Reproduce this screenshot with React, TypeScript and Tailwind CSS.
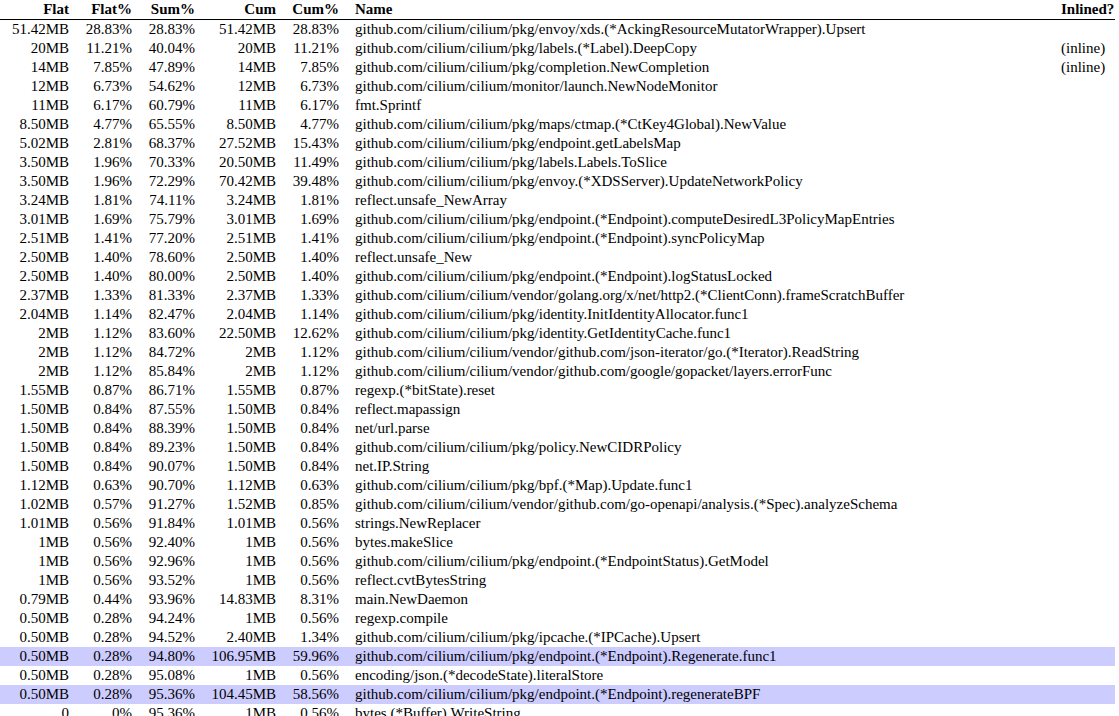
const raw = `51.42MB|28.83%|28.83%|51.42MB|28.83%|github.com/cilium/cilium/pkg/envoy/xds.(*AckingResourceMutatorWrapper).Upsert|
20MB|11.21%|40.04%|20MB|11.21%|github.com/cilium/cilium/pkg/labels.(*Label).DeepCopy|(inline)
14MB|7.85%|47.89%|14MB|7.85%|github.com/cilium/cilium/pkg/completion.NewCompletion|(inline)
12MB|6.73%|54.62%|12MB|6.73%|github.com/cilium/cilium/monitor/launch.NewNodeMonitor|
11MB|6.17%|60.79%|11MB|6.17%|fmt.Sprintf|
8.50MB|4.77%|65.55%|8.50MB|4.77%|github.com/cilium/cilium/pkg/maps/ctmap.(*CtKey4Global).NewValue|
5.02MB|2.81%|68.37%|27.52MB|15.43%|github.com/cilium/cilium/pkg/endpoint.getLabelsMap|
3.50MB|1.96%|70.33%|20.50MB|11.49%|github.com/cilium/cilium/pkg/labels.Labels.ToSlice|
3.50MB|1.96%|72.29%|70.42MB|39.48%|github.com/cilium/cilium/pkg/envoy.(*XDSServer).UpdateNetworkPolicy|
3.24MB|1.81%|74.11%|3.24MB|1.81%|reflect.unsafe_NewArray|
3.01MB|1.69%|75.79%|3.01MB|1.69%|github.com/cilium/cilium/pkg/endpoint.(*Endpoint).computeDesiredL3PolicyMapEntries|
2.51MB|1.41%|77.20%|2.51MB|1.41%|github.com/cilium/cilium/pkg/endpoint.(*Endpoint).syncPolicyMap|
2.50MB|1.40%|78.60%|2.50MB|1.40%|reflect.unsafe_New|
2.50MB|1.40%|80.00%|2.50MB|1.40%|github.com/cilium/cilium/pkg/endpoint.(*Endpoint).logStatusLocked|
2.37MB|1.33%|81.33%|2.37MB|1.33%|github.com/cilium/cilium/vendor/golang.org/x/net/http2.(*ClientConn).frameScratchBuffer|
2.04MB|1.14%|82.47%|2.04MB|1.14%|github.com/cilium/cilium/pkg/identity.InitIdentityAllocator.func1|
2MB|1.12%|83.60%|22.50MB|12.62%|github.com/cilium/cilium/pkg/identity.GetIdentityCache.func1|
2MB|1.12%|84.72%|2MB|1.12%|github.com/cilium/cilium/vendor/github.com/json-iterator/go.(*Iterator).ReadString|
2MB|1.12%|85.84%|2MB|1.12%|github.com/cilium/cilium/vendor/github.com/google/gopacket/layers.errorFunc|
1.55MB|0.87%|86.71%|1.55MB|0.87%|regexp.(*bitState).reset|
1.50MB|0.84%|87.55%|1.50MB|0.84%|reflect.mapassign|
1.50MB|0.84%|88.39%|1.50MB|0.84%|net/url.parse|
1.50MB|0.84%|89.23%|1.50MB|0.84%|github.com/cilium/cilium/pkg/policy.NewCIDRPolicy|
1.50MB|0.84%|90.07%|1.50MB|0.84%|net.IP.String|
1.12MB|0.63%|90.70%|1.12MB|0.63%|github.com/cilium/cilium/pkg/bpf.(*Map).Update.func1|
1.02MB|0.57%|91.27%|1.52MB|0.85%|github.com/cilium/cilium/vendor/github.com/go-openapi/analysis.(*Spec).analyzeSchema|
1.01MB|0.56%|91.84%|1.01MB|0.56%|strings.NewReplacer|
1MB|0.56%|92.40%|1MB|0.56%|bytes.makeSlice|
1MB|0.56%|92.96%|1MB|0.56%|github.com/cilium/cilium/pkg/endpoint.(*EndpointStatus).GetModel|
1MB|0.56%|93.52%|1MB|0.56%|reflect.cvtBytesString|
0.79MB|0.44%|93.96%|14.83MB|8.31%|main.NewDaemon|
0.50MB|0.28%|94.24%|1MB|0.56%|regexp.compile|
0.50MB|0.28%|94.52%|2.40MB|1.34%|github.com/cilium/cilium/pkg/ipcache.(*IPCache).Upsert|
0.50MB|0.28%|94.80%|106.95MB|59.96%|github.com/cilium/cilium/pkg/endpoint.(*Endpoint).Regenerate.func1|
0.50MB|0.28%|95.08%|1MB|0.56%|encoding/json.(*decodeState).literalStore|
0.50MB|0.28%|95.36%|104.45MB|58.56%|github.com/cilium/cilium/pkg/endpoint.(*Endpoint).regenerateBPF|
0|0%|95.36%|1MB|0.56%|bytes.(*Buffer).WriteString|`;
const rows = raw.split("\n").map((l) => l.split("|"));
const hl = new Set([33, 35]);

function Row({ c, bold, bg }: { c: string[]; bold?: boolean; bg?: boolean }) {
  return (
    <div className={`flex h-[19px] items-center whitespace-nowrap ${bold ? "font-bold border-b border-black h-[20px]" : ""} ${bg ? "bg-[#ccccff]" : ""}`}>
      <div className="w-[69px] shrink-0 text-right">{c[0]}</div>
      <div className="w-[63px] shrink-0 text-right">{c[1]}</div>
      <div className="w-[63px] shrink-0 text-right">{c[2]}</div>
      <div className="w-[81px] shrink-0 text-right">{c[3]}</div>
      <div className="w-[63px] shrink-0 text-right">{c[4]}</div>
      <div className="flex-1 pl-[16px] text-left overflow-hidden">{c[5]}</div>
      <div className="w-[54px] shrink-0 text-left">{c[6]}</div>
    </div>
  );
}

export default function App() {
  return (
    <div className="w-[1119px] h-[716px] overflow-hidden bg-white text-black text-[15px] leading-[19px]" style={{ fontFamily: '"Liberation Serif", serif' }}>
      <div className="w-[1115px]">
        <Row c={["Flat", "Flat%", "Sum%", "Cum", "Cum%", "Name", "Inlined?"]} bold />
        {rows.map((r, i) => (
          <Row key={i} c={r} bg={hl.has(i)} />
        ))}
      </div>
    </div>
  );
}
